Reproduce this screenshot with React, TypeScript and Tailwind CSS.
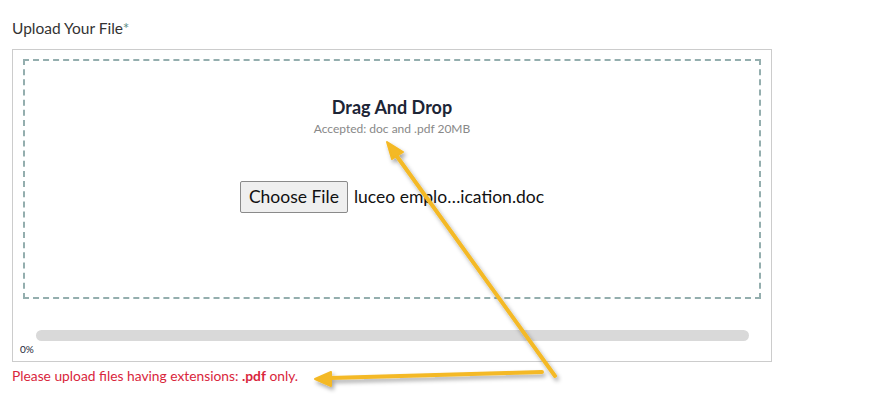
import { useState } from 'react'

function Arrows() {
  // yellow annotation arrows drawn over the form
  return (
    <svg
      className="pointer-events-none absolute left-0 top-0"
      width={874}
      height={415}
      viewBox="0 0 874 415"
    >
      <defs>
        <filter id="shadow" x="-20%" y="-20%" width="140%" height="140%">
          <feDropShadow dx="2" dy="3" stdDeviation="2" floodColor="#000" floodOpacity="0.35" />
        </filter>
      </defs>
      <g filter="url(#shadow)" fill="#f4b925" stroke="#f4b925">
        <line x1="555" y1="376" x2="396" y2="155" strokeWidth="4" strokeLinecap="round" />
        <polygon points="387,142 403,152 392,159" strokeWidth="2" strokeLinejoin="round" />
        <line x1="542" y1="372" x2="330" y2="378" strokeWidth="4" strokeLinecap="round" />
        <polygon points="315,379 331,372 331,386" strokeWidth="2" strokeLinejoin="round" />
      </g>
    </svg>
  )
}

export default function App() {
  const [fileName] = useState('luceo emplo…ication.doc')
  const progress = 0

  return (
    <div className="relative h-[415px] w-[874px] bg-white font-['Lato','Liberation_Sans',sans-serif] text-[#333]">
      <div className="pl-[12px] pt-[18px]">
        <label className="block text-[15.5px] leading-[20px]">
          Upload Your File<span className="text-[#5f8f8a]">*</span>
        </label>

        <div className="mt-[11px] w-[760px] border border-[#ccc] px-[10px] pt-[9px] pb-[6px]">
          {/* Drop zone */}
          <div className="flex h-[240px] flex-col items-center border-2 border-dashed border-[#94aeae] pt-[34px]">
            <h3 className="text-[18px] font-bold leading-[24px] text-[#1c2536]">Drag And Drop</h3>
            <p className="mt-[3px] text-[12px] leading-[14px] text-[#888]">Accepted: doc and .pdf 20MB</p>
            <div className="mt-[45px] flex items-center gap-[6px]">
              <button className="h-[32px] rounded-[2px] border border-[#8a8a8a] bg-[#efefef] px-[8px] text-[17.5px] leading-none text-[#111]">
                Choose File
              </button>
              <span className="text-[17.5px] text-[#111]">{fileName}</span>
            </div>
          </div>

          {/* Progress */}
          <div className="mt-[31px] pl-[13px] pr-[12px]">
            <div className="h-[11px] w-full rounded-full bg-[#d9d9d9]">
              <div className="h-full rounded-full bg-[#5f8f8a]" style={{ width: `${progress}%` }} />
            </div>
          </div>
          <div className="-ml-[3px] mt-[2px] text-[10px] leading-[12px] text-[#1c2536]">{progress}%</div>
        </div>

        <p className="mt-[5px] text-[13.8px] leading-[18px] text-[#d9263c]">
          Please upload files having extensions: <b>.pdf</b> only.
        </p>
      </div>
      <Arrows />
    </div>
  )
}
